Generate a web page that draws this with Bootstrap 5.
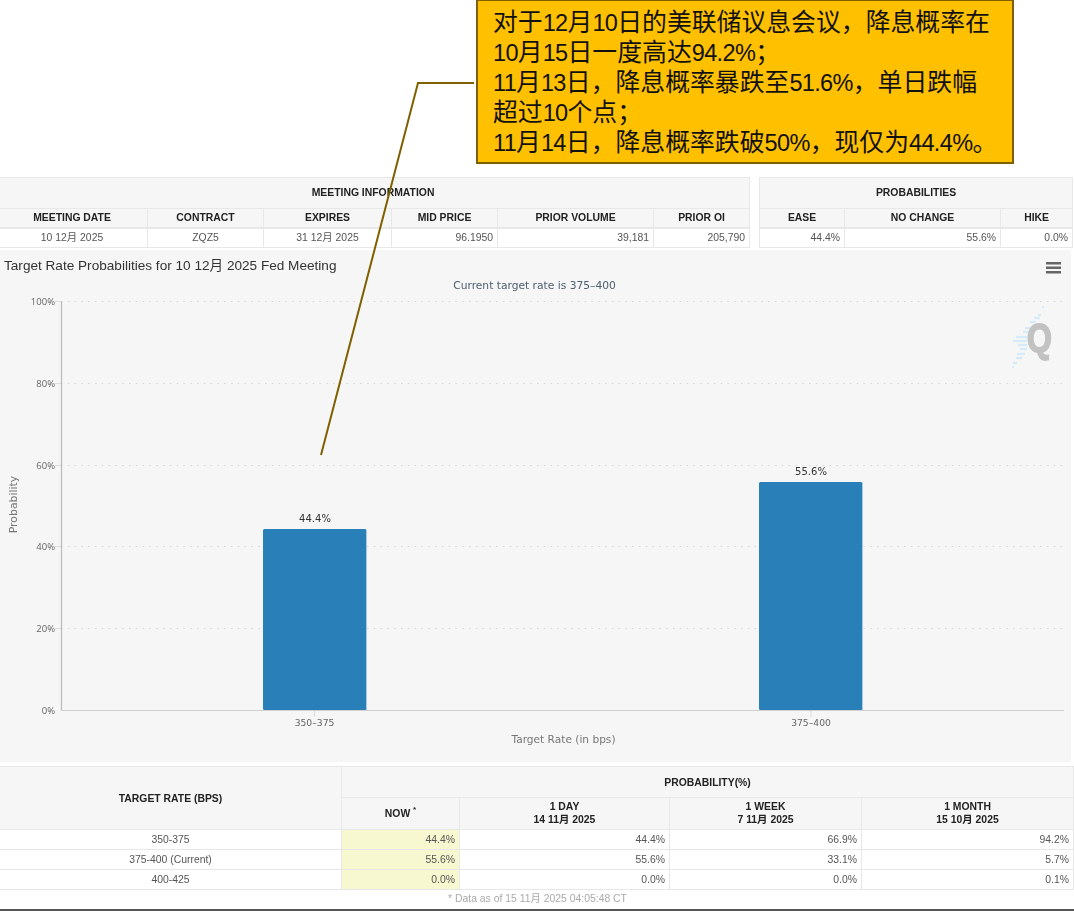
<!DOCTYPE html>
<html lang="zh">
<head>
<meta charset="utf-8">
<link href="https://cdn.jsdelivr.net/npm/bootstrap@5.3.0/dist/css/bootstrap.min.css" rel="stylesheet">
<style>
html,body{height:912px;overflow:hidden;background:#fff}
body{font-family:"Liberation Sans","Noto Sans CJK SC",sans-serif;color:#333;position:relative}
.stage{height:912px;padding-top:177px;overflow:hidden}
.callout{position:absolute;left:476px;top:-1px;width:538px;height:165px;background:#ffc000;border:2px solid #7f6000;padding:7px 0 0 15px;font-family:"Liberation Sans","Noto Sans CJK SC",sans-serif;font-size:24.85px;line-height:30px;color:#111;white-space:nowrap;z-index:3}
.halfw{font-size:23.5px;letter-spacing:-.65px}
.leader{position:absolute;left:0;top:0;z-index:2;pointer-events:none}
.soft{filter:blur(.35px)}
.top-tables{gap:9px;height:71px;margin-left:-4px;width:1078px}
.data-tbl{border-collapse:collapse;table-layout:fixed;margin:0;font-size:10.4px;line-height:13px;background:#fff;--bs-table-bg:transparent}
.data-tbl th,.data-tbl td{border:1px solid #e8e8e8;padding:0 4px;vertical-align:middle}
.data-tbl th{background:#f6f6f6;color:#222;text-align:center;font-weight:700;text-transform:uppercase}
.data-tbl td{color:#555;text-align:right;height:20px}
.data-tbl td.mid{text-align:center}
.data-tbl td.now{background:#f7f7d0}
.t-info{width:753px}
.t-prob{width:313px}
.t-info tr:nth-child(1) th,.t-prob tr:nth-child(1) th{height:31px;padding-bottom:2px}
.t-info tr:nth-child(2) th,.t-prob tr:nth-child(2) th{height:19px;border-bottom:2px solid #e8e8e8}
.chart-panel{margin-top:2px;height:512px;width:1071px;background:#f6f6f6}
.chart-panel svg{display:block}
.lower{margin-top:4px;margin-left:-1px;width:1075px;border-bottom:2px solid #555}
.t-rate{width:1074px}
.t-rate tr.r1 th{height:31px}
.t-rate tr.r2 th{height:32px}
.t-rate tr.r2 th.two{padding-bottom:2px}
.t-rate .narrow{height:20px}
.foot-note{text-align:center;color:#aaa;font-size:10.4px;line-height:18px;height:19px;background:#fff;padding-left:2px}
sup.star{font-size:8px;top:-.6em}
</style>
</head>
<body>
<div class="stage">
  <div class="callout">对于<span class="halfw">12</span>月<span class="halfw">10</span>日的美联储议息会议，降息概率在<br><span class="halfw">10</span>月<span class="halfw">15</span>日一度高达<span class="halfw">94.2%</span>；<br><span class="halfw">11</span>月<span class="halfw">13</span>日，降息概率暴跌至<span class="halfw">51.6%</span>，单日跌幅<br>超过<span class="halfw">10</span>个点；<br><span class="halfw">11</span>月<span class="halfw">14</span>日，降息概率跌破<span class="halfw">50%</span>，现仅为<span class="halfw">44.4%</span>。</div>
  <svg class="leader" width="1074" height="912"><polyline points="474,83 418,83 321,455" fill="none" stroke="#7f6000" stroke-width="2"/></svg>

  <div class="d-flex top-tables soft">
    <table class="table data-tbl t-info">
      <colgroup><col style="width:151px"><col style="width:116px"><col style="width:128px"><col style="width:106px"><col style="width:156px"><col style="width:96px"></colgroup>
      <tr><th colspan="6">Meeting Information</th></tr>
      <tr><th>Meeting Date</th><th>Contract</th><th>Expires</th><th>Mid Price</th><th>Prior Volume</th><th>Prior OI</th></tr>
      <tr><td class="mid">10 12月 2025</td><td class="mid">ZQZ5</td><td class="mid">31 12月 2025</td><td>96.1950</td><td>39,181</td><td>205,790</td></tr>
    </table>
    <table class="table data-tbl t-prob">
      <colgroup><col style="width:85px"><col style="width:156px"><col style="width:72px"></colgroup>
      <tr><th colspan="3">Probabilities</th></tr>
      <tr><th>Ease</th><th>No Change</th><th>Hike</th></tr>
      <tr><td>44.4%</td><td>55.6%</td><td>0.0%</td></tr>
    </table>
  </div>

  <div class="chart-panel soft">
    <svg width="1071" height="512" viewBox="0 250 1071 512" font-family="DejaVu Sans, Noto Sans CJK SC, sans-serif">
      <text x="4" y="269.500" font-size="13.6" fill="#333" font-family="Liberation Sans, Noto Sans CJK SC, sans-serif">Target Rate Probabilities for 10 12月 2025 Fed Meeting</text>
      <g fill="#666"><rect x="1046" y="262" width="15" height="2.500"/><rect x="1046" y="266.500" width="15" height="2.500"/><rect x="1046" y="271" width="15" height="2.500"/></g>
      <text x="534.500" y="289" font-size="10.700" fill="#4d5f70" text-anchor="middle">Current target rate is 375–400</text>
      <g stroke="#d6d6d6" stroke-width="1.200" stroke-dasharray="1.500 5.300">
        <line x1="61" x2="1064" y1="301.500" y2="301.500"/><line x1="61" x2="1064" y1="383.500" y2="383.500"/><line x1="61" x2="1064" y1="465.500" y2="465.500"/><line x1="61" x2="1064" y1="546.500" y2="546.500"/><line x1="61" x2="1064" y1="628.500" y2="628.500"/>
      </g>
      <g stroke="#dcdcdc"><line x1="55" x2="61" y1="301.500" y2="301.500"/><line x1="55" x2="61" y1="383.500" y2="383.500"/><line x1="55" x2="61" y1="465.500" y2="465.500"/><line x1="55" x2="61" y1="546.500" y2="546.500"/><line x1="55" x2="61" y1="628.500" y2="628.500"/><line x1="314.500" x2="314.500" y1="711" y2="717"/><line x1="811" x2="811" y1="711" y2="717"/></g>
      <line x1="61.500" x2="61.500" y1="301" y2="711" stroke="#bdbdbd" stroke-width="1.300"/>
      <line x1="61" x2="1064" y1="710.500" y2="710.500" stroke="#cfcfcf"/>
      <g font-size="9.500" fill="#666" text-anchor="end" font-family="Open Sans, sans-serif">
        <text x="55" y="305">100%</text><text x="55" y="387">80%</text><text x="55" y="469">60%</text><text x="55" y="550">40%</text><text x="55" y="632">20%</text><text x="55" y="714">0%</text>
      </g>
      <text transform="translate(17 504.500) rotate(-90)" font-size="10.900" fill="#777" text-anchor="middle">Probability</text>
      <rect x="263" y="529" width="103.500" height="181" rx="1.500" fill="#2980b9"/>
      <rect x="759" y="482" width="103.500" height="228" rx="1.500" fill="#2980b9"/>
      <g stroke="#a8cfe8" stroke-width=".8"><line x1="366.500" x2="366.500" y1="530" y2="710"/><line x1="862.500" x2="862.500" y1="483" y2="710"/></g>
      <g font-size="10" fill="#333" text-anchor="middle"><text x="315" y="522">44.4%</text><text x="811" y="475">55.6%</text></g>
      <g font-size="9.200" fill="#666" text-anchor="middle"><text x="314.500" y="726">350–375</text><text x="811" y="726">375–400</text></g>
      <text x="563.500" y="743" font-size="10.600" fill="#777" text-anchor="middle">Target Rate (in bps)</text>
      <g stroke="#d3ecf9" stroke-width="2.200">
        <line x1="1042" y1="307" x2="1044" y2="307"/><line x1="1038" y1="315" x2="1041" y2="315"/><line x1="1034" y1="318" x2="1040" y2="318"/><line x1="1030" y1="322" x2="1036" y2="322"/><line x1="1025" y1="328" x2="1030" y2="328"/><line x1="1023" y1="332" x2="1028" y2="332"/><line x1="1016" y1="337" x2="1027" y2="337"/><line x1="1013" y1="341" x2="1027" y2="341"/><line x1="1018" y1="345" x2="1027" y2="345"/><line x1="1020" y1="349" x2="1027" y2="349"/><line x1="1017" y1="354" x2="1025" y2="354"/><line x1="1016" y1="358" x2="1022" y2="358"/><line x1="1013" y1="363" x2="1017" y2="363"/><line x1="1012" y1="367" x2="1014" y2="367"/>
      </g>
      <text transform="translate(1039.500 352) scale(1 1.250)" font-size="32" font-weight="700" fill="#c2c2c2" stroke="#c2c2c2" stroke-width="1.400" text-anchor="middle" font-family="Liberation Sans, sans-serif">Q</text>
    </svg>
  </div>

  <div class="lower soft">
    <table class="table data-tbl t-rate">
      <colgroup><col style="width:342px"><col style="width:118px"><col style="width:210px"><col style="width:192px"><col style="width:212px"></colgroup>
      <tr class="r1"><th rowspan="2">Target Rate (bps)</th><th colspan="4">Probability(%)</th></tr>
      <tr class="r2"><th>Now <sup class="star">*</sup></th><th class="two">1 Day<br>14 11月 2025</th><th class="two">1 Week<br>7 11月 2025</th><th class="two">1 Month<br>15 10月 2025</th></tr>
      <tr><td class="mid narrow">350-375</td><td class="now">44.4%</td><td>44.4%</td><td>66.9%</td><td>94.2%</td></tr>
      <tr><td class="mid narrow">375-400 (Current)</td><td class="now">55.6%</td><td>55.6%</td><td>33.1%</td><td>5.7%</td></tr>
      <tr><td class="mid narrow">400-425</td><td class="now">0.0%</td><td>0.0%</td><td>0.0%</td><td>0.1%</td></tr>
    </table>
    <div class="foot-note">* Data as of 15 11月 2025 04:05:48 CT</div>
  </div>
</div>
<script src="https://cdn.jsdelivr.net/npm/bootstrap@5.3.0/dist/js/bootstrap.bundle.min.js"></script>
</body>
</html>
